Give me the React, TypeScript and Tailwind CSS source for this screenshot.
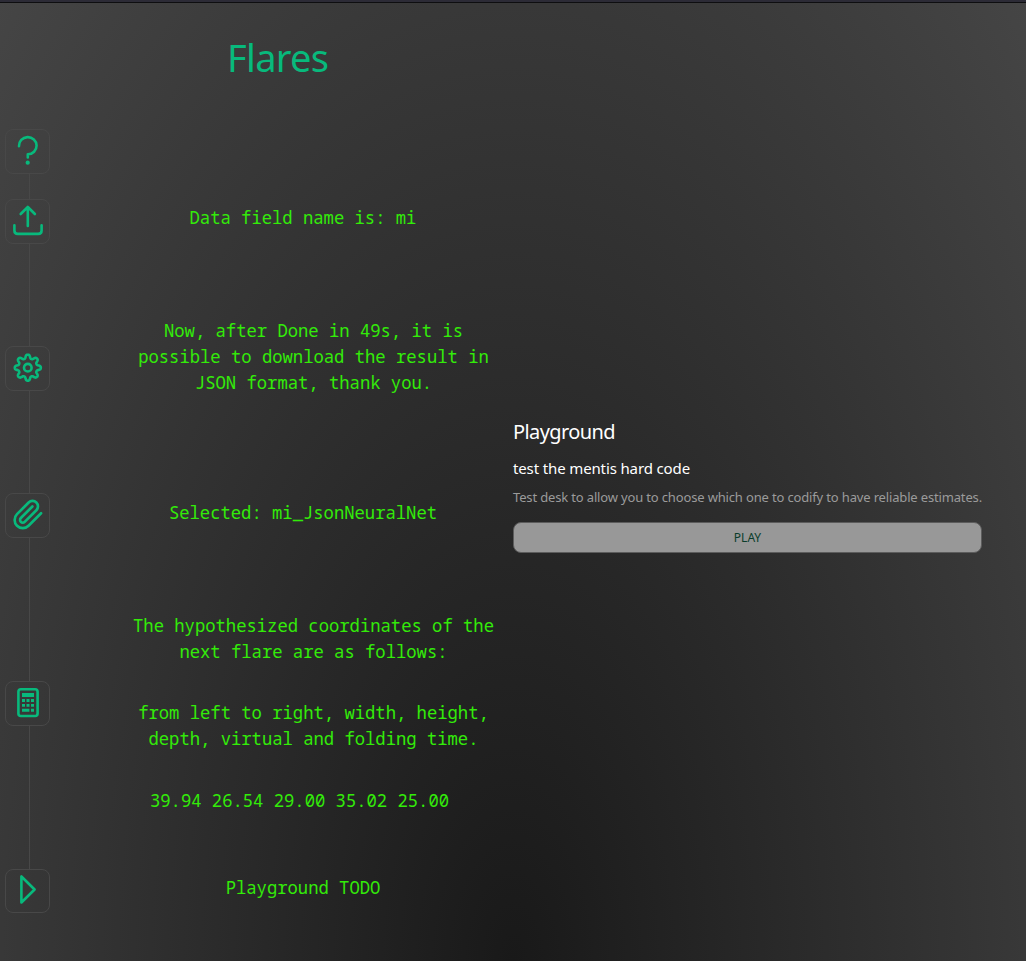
import React from "react";

const gearPath =
  Array.from({ length: 160 }, (_, i) => {
    const a = (i / 160) * Math.PI * 2;
    const wave = Math.tanh(1.5 * Math.cos(8 * a)) / Math.tanh(1.5);
    const r = 11.2 + 1.8 * wave;
    return `${i ? "L" : "M"}${(22.8 + r * Math.sin(a)).toFixed(2)} ${(21.7 - r * Math.cos(a)).toFixed(2)}`;
  }).join("") + "Z";

function Tile({ children, short }: { children: React.ReactNode; short?: boolean }) {
  return (
    <div
      className={`w-[45px] shrink-0 overflow-hidden rounded-lg border border-[#484848] ${short ? "h-[44px]" : "h-[45px]"}`}
    >
      <svg
        viewBox="1 1 43 43"
        className="block h-[43px] w-[43px] text-[#08b97c]"
        fill="none"
        stroke="currentColor"
        strokeWidth="2.6"
        strokeLinecap="round"
        strokeLinejoin="round"
      >
        {children}
      </svg>
    </div>
  );
}

function Link({ className }: { className: string }) {
  return <div className={`ml-6 w-px shrink-0 bg-[#484848] ${className}`} />;
}

function Rail() {
  return (
    <nav className="ml-[5px] flex w-[45px] flex-col pt-[126px]">
      <Tile>
        <path d="M14 17.2A8.8 8.6 0 1 1 22.8 25.3V28.4" />
        <circle cx="22.7" cy="33.7" r="2.1" fill="currentColor" stroke="none" />
      </Tile>
      <Link className="h-[25px]" />
      <Tile>
        <path d="M22.8 27V8M15.7 15L22.8 8L29.9 15M9.4 26.2V31.5Q9.4 34.9 12.8 34.9H33.2Q36.6 34.9 36.6 31.5V26.2" />
      </Tile>
      <Link className="h-[102px]" />
      <Tile>
        <path d={gearPath} />
        <circle cx="22.8" cy="21.7" r="3.8" />
      </Tile>
      <Link className="h-[102px]" />
      <Tile>
        <path
          transform="translate(6.9 5.2) scale(1.36)"
          strokeWidth="1.95"
          d="m21.44 11.05-9.19 9.19a6 6 0 0 1-8.49-8.49l8.57-8.57A4 4 0 1 1 18 8.84l-8.59 8.57a2 2 0 0 1-2.83-2.83l8.49-8.48"
        />
      </Tile>
      <Link className="h-[143px]" />
      <Tile>
        <rect x="13.4" y="8.2" width="19.2" height="26.8" rx="2.5" />
        <path
          fill="currentColor"
          stroke="none"
          d="M17 12h12v4H17zM17 18h3v3h-3zM21.5 18h3v3h-3zM26 18h3v3h-3zM17 23h3v2.8h-3zM21.5 23h3v2.8h-3zM26 23h3v2.8h-3zM17 27.8h7.4v3H17zM26 27.8h3v3h-3z"
        />
      </Tile>
      <Link className="h-[143px]" />
      <Tile short>
        <path d="M16.4 7.5V33.5L29.6 20.5Z" />
      </Tile>
    </nav>
  );
}

function Log() {
  return (
    <section className="ml-[70px] w-[387px] shrink-0 text-center font-['Noto_Sans_Mono','DejaVu_Sans_Mono',monospace] text-[17.2px] leading-[26px] whitespace-nowrap text-[#33eb09]">
      <h1 className="mt-[28px] ml-[107px] h-[52px] text-left font-['Noto_Sans','Open_Sans',sans-serif] text-[38px] leading-[52px] tracking-[-0.7px] text-[#08b97c]">
        Flares
      </h1>
      <p className="mt-[122px] mr-[21px]">Data field name is: mi</p>
      <p className="mt-[87px]">
        Now, after Done in 49s, it is
        <br />
        possible to download the result in
        <br />
        JSON format, thank you.
      </p>
      <p className="mt-[104px] mr-[21px]">Selected: mi_JsonNeuralNet</p>
      <p className="mt-[87px]">
        The hypothesized coordinates of the
        <br />
        next flare are as follows:
      </p>
      <p className="mt-[35px]">
        from left to right, width, height,
        <br />
        depth, virtual and folding time.
      </p>
      <p className="mt-[36px] mr-[28px]">39.94 26.54 29.00 35.02 25.00</p>
      <p className="mt-[61px] mr-[21px]">Playground TODO</p>
    </section>
  );
}

function Playground() {
  return (
    <section className="ml-[6px] w-[469px] pt-[415px] font-['Noto_Sans','Open_Sans',sans-serif] whitespace-nowrap">
      <h2 className="h-7 text-[20px] leading-7 tracking-[-0.6px] text-white">Playground</h2>
      <p className="mt-[10px] h-6 text-[15px] leading-6 tracking-[-0.13px] text-white">
        test the mentis hard code
      </p>
      <p className="mt-[7px] h-5 text-[13px] leading-5 tracking-[-0.155px] text-[#9b9b9b]">
        Test desk to allow you to choose which one to codify to have reliable estimates.
      </p>
      <button className="mt-[15px] block h-[31px] w-full rounded-lg border border-[#5c5c5c] bg-[#989898] text-[12px] text-[#0b3d2b]">
        PLAY
      </button>
    </section>
  );
}

export default function App() {
  return (
    <div className="h-[961px] w-[1026px] overflow-hidden bg-[radial-gradient(ellipse_farthest-corner_at_50%_100%,#191919,#454545)]">
      <div className="h-[3px] border-b border-[#0e0e10] bg-[#2c2b36]" />
      <div className="flex h-[958px]">
        <Rail />
        <Log />
        <Playground />
      </div>
    </div>
  );
}
